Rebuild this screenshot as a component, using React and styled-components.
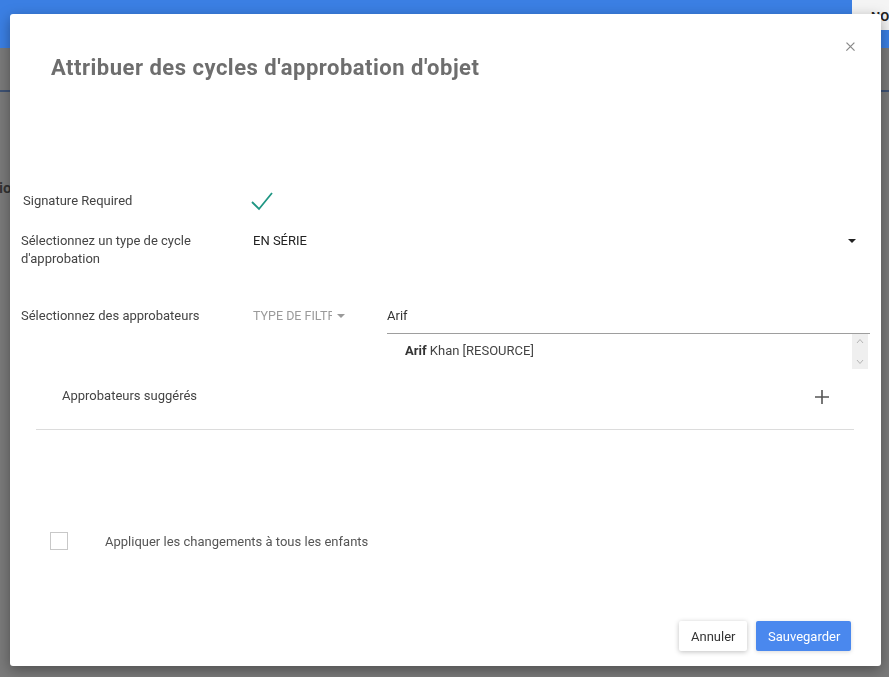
import React from 'react'
import styled, { createGlobalStyle } from 'styled-components'

const GlobalStyle = createGlobalStyle`
  html, body {
    margin: 0;
    padding: 0;
    background: #7a7a7a;
    font-family: Roboto, "Liberation Sans", sans-serif;
  }
`

const Page = styled.div`
  width: 889px;
  height: 677px;
  overflow: hidden;
  background: #7a7a7a;
`

const TopBar = styled.div`
  height: 48px;
  background: #3b7fe3;
  display: flex;
  justify-content: flex-end;
  align-items: flex-start;
`

const TopButton = styled.div`
  width: 40px;
  height: 30px;
  margin-right: -3px;
  background: #f4f4f4;
  color: #222;
  font-size: 13px;
  font-weight: 700;
  padding: 9px 0 0 19px;
  box-sizing: border-box;
`

const SubBar = styled.div`
  height: 42px;
  border-bottom: 2px solid #3e5274;
`

const PageText = styled.div`
  margin: 87px 0 0 -1px;
  font-size: 15px;
  font-weight: 700;
  color: #333;
`

const Dialog = styled.div`
  position: fixed;
  top: 14px;
  left: 10px;
  width: 871px;
  height: 652px;
  background: #fff;
  border-radius: 3px;
  box-shadow: 0 4px 14px rgba(0, 0, 0, 0.35);
  display: flex;
  flex-direction: column;
  box-sizing: border-box;
`

const Header = styled.div`
  display: flex;
  justify-content: space-between;
  align-items: flex-start;
  padding: 40px 25px 0 41px;
  height: 176px;
  box-sizing: border-box;
`

const Title = styled.h2`
  margin: 0;
  font-size: 22px;
  line-height: 28px;
  letter-spacing: 0.5px;
  font-weight: 700;
  color: #6e6e6e;
`

const CloseButton = styled.button`
  border: none;
  background: none;
  padding: 0;
  margin-top: -20px;
  color: #888;
  font-size: 21px;
  line-height: 22px;
  font-weight: 300;
  cursor: pointer;
  font-family: Roboto, sans-serif;
`

const Body = styled.div`
  padding: 0 11px;
  display: flex;
  flex-direction: column;
`

const Row = styled.div`
  display: grid;
  grid-template-columns: 232px 1fr;
  align-items: ${p => (p.top ? 'start' : 'center')};
  margin-bottom: ${p => p.gap || 0}px;
  font-size: 13px;
  color: #444;
`

const Label = styled.div`
  line-height: 18px;
  padding-left: ${p => p.indent || 0}px;
  padding-top: ${p => p.offset || 0}px;
`

const Check = styled.svg`
  width: 24px;
  height: 22px;
  margin-left: -3px;
`

const SelectBox = styled.div`
  display: flex;
  justify-content: space-between;
  align-items: center;
  color: #222;
  line-height: 18px;
  padding-right: 14px;
`

const Caret = styled.span`
  width: 0;
  height: 0;
  border-left: 4px solid transparent;
  border-right: 4px solid transparent;
  border-top: 4px solid ${p => p.color || '#222'};
  display: inline-block;
`

const ApproverGrid = styled.div`
  display: grid;
  grid-template-columns: 134px 1fr;
  align-items: start;
`

const FilterType = styled.div`
  display: flex;
  align-items: center;
  gap: 5px;
  color: #9a9a9a;
  font-size: 12.5px;
  line-height: 18px;
  padding-top: 3px;
`

const FilterText = styled.span`
  width: 79px;
  overflow: hidden;
  white-space: nowrap;
`

const SearchColumn = styled.div`
  display: flex;
  flex-direction: column;
`

const SearchInput = styled.div`
  border-bottom: 1px solid #9e9e9e;
  padding: 3px 0 8px;
  color: #333;
  line-height: 18px;
`

const Suggestions = styled.div`
  display: flex;
  justify-content: space-between;
  height: 35px;
  margin-right: 2px;
`

const Suggestion = styled.div`
  padding: 8px 0 0 18px;
  color: #444;
  line-height: 18px;
  b {
    color: #333;
  }
`

const ScrollBar = styled.div`
  width: 16px;
  background: #efefef;
  display: flex;
  flex-direction: column;
  justify-content: space-between;
  align-items: center;
  padding: 4px 0;
  box-sizing: border-box;
`

const Arrow = styled.svg`
  width: 8px;
  height: 6px;
`

const SuggestedRow = styled.div`
  display: flex;
  justify-content: space-between;
  align-items: center;
  margin: 16px 27px 0 26px;
  padding: 0 0 24px 26px;
  border-bottom: 1px solid #dcdcdc;
  font-size: 13px;
  color: #444;
`

const PlusIcon = styled.svg`
  width: 16px;
  height: 16px;
  margin-right: 24px;
  margin-top: 4px;
`

const ChildrenRow = styled.label`
  display: flex;
  align-items: center;
  margin: 102px 0 0 40px;
  font-size: 13px;
  color: #555;
`

const Box = styled.span`
  width: 16px;
  height: 16px;
  border: 1px solid #c8c8c8;
  margin-right: 37px;
`

const Footer = styled.div`
  margin-top: auto;
  display: flex;
  justify-content: flex-end;
  gap: 9px;
  padding: 0 30px 15px 0;
`

const Button = styled.button`
  height: 30px;
  border: none;
  border-radius: 2px;
  padding: 0 12px;
  font-family: Roboto, "Liberation Sans", sans-serif;
  font-size: 13px;
  cursor: pointer;
  &.plain {
    background: #fff;
    color: #333;
    width: 68px;
    box-shadow: 0 1px 5px rgba(0, 0, 0, 0.25);
  }
  &.primary {
    background: #4a88ee;
    color: #fff;
    width: 95px;
    box-shadow: 0 1px 4px rgba(0, 0, 0, 0.15);
  }
`

const App = () => {
  return (
    <>
      <GlobalStyle />
      <Page>
        <TopBar>
          <TopButton>NO</TopButton>
        </TopBar>
        <SubBar />
        <PageText>io</PageText>
      </Page>
      <Dialog>
        <Header>
          <Title>Attribuer des cycles d'approbation d'objet</Title>
          <CloseButton>×</CloseButton>
        </Header>
        <Body>
          <Row gap={20}>
            <Label indent={2}>Signature Required</Label>
            <Check viewBox="0 0 24 22">
              <path d="M2 12 L9 19 L22 3" fill="none" stroke="#1f9683" strokeWidth="1.8" />
            </Check>
          </Row>
          <Row top gap={36}>
            <Label>Sélectionnez un type de cycle<br />d'approbation</Label>
            <SelectBox>
              EN SÉRIE
              <Caret />
            </SelectBox>
          </Row>
          <Row top>
            <Label offset={3}>Sélectionnez des approbateurs</Label>
            <ApproverGrid>
              <FilterType>
                <FilterText>TYPE DE FILTRE</FilterText>
                <Caret color="#9a9a9a" />
              </FilterType>
              <SearchColumn>
                <SearchInput>Arif</SearchInput>
                <Suggestions>
                  <Suggestion><b>Arif</b> Khan [RESOURCE]</Suggestion>
                  <ScrollBar>
                    <Arrow viewBox="0 0 8 6">
                      <path d="M1 5 L4 1.5 L7 5" fill="none" stroke="#b5b5b5" strokeWidth="1" />
                    </Arrow>
                    <Arrow viewBox="0 0 8 6">
                      <path d="M1 1 L4 4.5 L7 1" fill="none" stroke="#b5b5b5" strokeWidth="1" />
                    </Arrow>
                  </ScrollBar>
                </Suggestions>
              </SearchColumn>
            </ApproverGrid>
          </Row>
        </Body>
        <SuggestedRow>
          Approbateurs suggérés
          <PlusIcon viewBox="0 0 16 16">
            <path d="M8 1 V15 M1 8 H15" stroke="#555" strokeWidth="1.6" />
          </PlusIcon>
        </SuggestedRow>
        <ChildrenRow>
          <Box />
          Appliquer les changements à tous les enfants
        </ChildrenRow>
        <Footer>
          <Button className="plain">Annuler</Button>
          <Button className="primary">Sauvegarder</Button>
        </Footer>
      </Dialog>
    </>
  )
}

export default App
